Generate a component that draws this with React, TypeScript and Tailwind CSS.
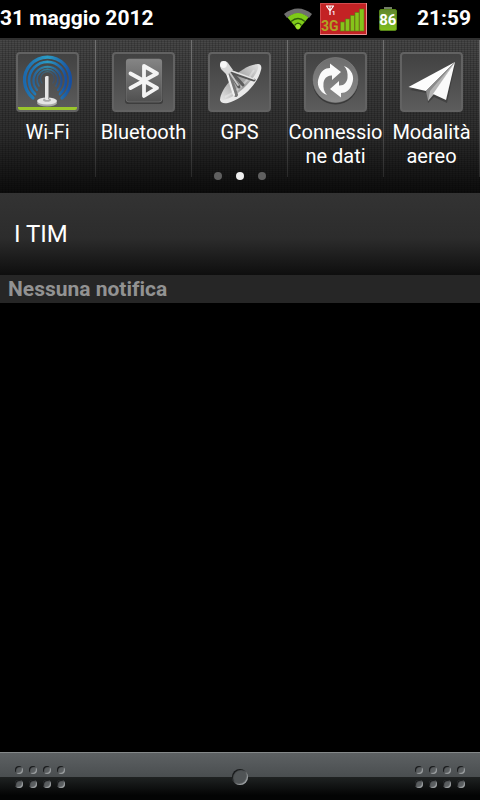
import React, { ReactNode } from 'react';

interface Toggle {
  label: string;
  icon: ReactNode;
  active?: boolean;
}

const WifiAntenna = () => (
  <svg viewBox="2 2 59 56" className="h-full w-full" aria-hidden="true">
    <defs>
      <linearGradient id="ring" x1="0" y1="0" x2="1" y2="0">
        <stop offset="0" stopColor="#1b69ae" />
        <stop offset="0.5" stopColor="#2b9cc4" />
        <stop offset="1" stopColor="#174fa0" />
      </linearGradient>
    </defs>
    <g fill="none" stroke="url(#ring)" strokeLinecap="round">
      <path d="M17 46A23 23 0 1 1 46 46" strokeWidth="3.2" />
      <path d="M19 42A18.5 18.5 0 1 1 44 42" strokeWidth="2.6" />
      <path d="M21 38A14 14 0 1 1 42 38" strokeWidth="2.2" opacity="0.8" />
      <path d="M23 34A10.5 10.5 0 1 1 40 34" strokeWidth="1.6" opacity="0.65" />
      <path d="M26 31A7 7 0 1 1 37 31" strokeWidth="1.2" opacity="0.4" />
    </g>
    <ellipse cx="31" cy="51" rx="10" ry="3.5" fill="#a9a9a9" />
    <ellipse cx="31" cy="49" rx="10" ry="3.5" fill="#e4e4e4" />
    <ellipse cx="31" cy="48" rx="4" ry="1.8" fill="#aaa" />
    <rect x="29" y="24" width="4" height="24" rx="1.5" fill="#e6e6e6" />
    <path d="M32.5 25V47" stroke="#a0a0a0" />
  </svg>
);

const BluetoothIcon = () => (
  <svg viewBox="2 2 59 56" className="h-full w-full" aria-hidden="true">
    <defs>
      <linearGradient id="bt" x1="0" y1="0" x2="0" y2="1">
        <stop offset="0" stopColor="#858585" />
        <stop offset="1" stopColor="#505050" />
      </linearGradient>
    </defs>
    <rect x="13" y="8" width="38" height="44" rx="3" fill="#2b2b2b" opacity="0.6" />
    <rect x="14" y="7" width="36" height="43" rx="3" fill="url(#bt)" stroke="#858585" strokeOpacity="0.5" />
    <path
      d="M18.5 21.5L45 36L32 44V14L45 21.5L18.5 36"
      fill="none"
      stroke="#f4f4f4"
      strokeWidth="3.8"
      strokeLinecap="round"
      strokeLinejoin="round"
    />
  </svg>
);

const DishIcon = () => (
  <svg viewBox="2 2 59 56" className="h-full w-full" aria-hidden="true">
    <defs>
      <linearGradient id="dish" x1="0" y1="1" x2="1" y2="0">
        <stop offset="0" stopColor="#e8e8e8" />
        <stop offset="0.5" stopColor="#9a9a9a" />
        <stop offset="1" stopColor="#e0e0e0" />
      </linearGradient>
    </defs>
    <path d="M12 48C13 52 18 52 23 50C36 46 50 31 53 18C54 15 53 12 50 12Z" fill="#e9e9e9" />
    <path d="M12 48C12 37 32 13 50 12C54 20 27 50 12 48Z" fill="url(#dish)" />
    <path d="M17 45C24 42 37 34 46 18" fill="none" stroke="#f2f2f2" strokeWidth="2" opacity="0.4" />
    <g fill="none" strokeLinecap="round">
      <path d="M24 24L31 35M27 24L35 33" stroke="#5c5c5c" strokeWidth="3" />
      <path d="M22 20L46 28" stroke="#555" strokeWidth="3" />
      <path d="M21 22L28 43" stroke="#777" strokeWidth="4" />
      <path d="M21 18L46 27" stroke="#e4e4e4" strokeWidth="1.8" />
      <path d="M19 21L26 43" stroke="#f0f0f0" strokeWidth="2.2" />
      <path d="M22 21L30 33" stroke="#c5c5c5" strokeWidth="1.8" />
    </g>
    <path d="M12 14C12 9 18 8 20 11L25 18L19 23L13 17Z" fill="#d9d9d9" />
    <circle cx="15.5" cy="12.5" r="3.4" fill="#f7f7f7" />
  </svg>
);

const arrow = 'M23 43C15 40 12 32 15 25C17 19 21 16 26 16V11.5L37 20L28 28V23.5C23 23 20 27 19.5 31C19 36 20 40 23 43Z';

const SyncIcon = () => (
  <svg viewBox="2 2 59 56" className="h-full w-full" aria-hidden="true">
    <defs>
      <linearGradient id="disc" x1="0" y1="0" x2="0" y2="1">
        <stop offset="0" stopColor="#6d6d6d" />
        <stop offset="1" stopColor="#8d8d8d" />
      </linearGradient>
    </defs>
    <circle cx="31.5" cy="29.5" r="23" fill="#3a3a3a" />
    <circle cx="31.5" cy="28" r="22.5" fill="url(#disc)" stroke="#8b8b8b" strokeOpacity="0.5" />
    <path d={arrow} fill="#fafafa" />
    <path d={arrow} fill="#fafafa" transform="rotate(180 31.5 28.5)" />
  </svg>
);

const PlaneIcon = () => (
  <svg viewBox="2 2 59 56" className="h-full w-full" aria-hidden="true">
    <path d="M55 13L47 51L34 45L28 51L27 41L10 38Z" fill="#333" opacity="0.6" />
    <path d="M55 10L8.5 35L26 39Z" fill="#fdfdfd" />
    <path d="M55 10L26 39L28 49L34 40Z" fill="#8b8b8b" />
    <path d="M28 49L30 39L55 10L34 42Z" fill="#b5b5b5" />
    <path d="M55 10L33 42L46 48Z" fill="#fafafa" />
  </svg>
);

const toggles: Toggle[] = [
  { label: 'Wi-Fi', icon: <WifiAntenna />, active: true },
  { label: 'Bluetooth', icon: <BluetoothIcon /> },
  { label: 'GPS', icon: <DishIcon /> },
  { label: 'Connessione dati', icon: <SyncIcon /> },
  { label: 'Modalità aereo', icon: <PlaneIcon /> },
];

const WifiStatus = () => (
  <svg viewBox="0 0 28 22" className="h-[22px] w-7" role="img" aria-label="Wi-Fi">
    <path d="M0 6Q14 -5 28 6L25 10Q14 1 3 10Z" fill="#6f6f6f" />
    <path d="M3.5 9.5Q14 0.5 24.5 9.5L14 22Z" fill="#7ecb18" />
    <path d="M7 13.5Q14 7.5 21 13.5M10.5 17.5Q14 13 17.5 17.5" fill="none" stroke="#2f5c0a" strokeWidth="1.3" />
    <circle cx="14" cy="18.5" r="2.5" fill="#9ee52c" />
  </svg>
);

const MobileSignal = () => (
  <svg viewBox="0 0 47 32" className="h-8 w-[47px]" role="img" aria-label="3G">
    <rect width="47" height="32" fill="#c32224" />
    <path d="M0.5 31.5V0.5H46.5" fill="none" stroke="#d24c4e" />
    <path d="M46.5 0V31.5H0" fill="none" stroke="#e99092" />
    <path d="M6 3H14M6.5 3L10 8L13.5 3M10 3V12" fill="none" stroke="#fff" strokeWidth="1.2" />
    <text x="12" y="12" fill="#fff" fontSize="6" fontFamily="Roboto, sans-serif">1</text>
    <text x="1" y="28" fill="#b0a522" fontSize="14" fontWeight="700" fontFamily="Roboto, sans-serif">3G</text>
    <g fill="#86c41a" stroke="#5e7c16" strokeWidth="0.6">
      <rect x="20.5" y="19" width="4" height="9" />
      <rect x="25.5" y="16" width="4" height="12" />
      <rect x="30.5" y="12.5" width="4" height="15.5" />
      <rect x="35" y="9.5" width="4" height="18.5" />
      <rect x="39.5" y="6" width="4.5" height="22" />
    </g>
  </svg>
);

const Battery = () => (
  <div className="flex w-[18px] flex-col items-center">
    <div className="h-[2px] w-2 bg-[#717b66]" />
    <div className="flex h-[22px] w-full items-center justify-center rounded-[2px] border border-[#578518] bg-linear-to-b from-[#62872f] to-[#7fbd18] text-[15px] font-bold leading-4">
      86
    </div>
  </div>
);

const StatusBar = () => (
  <header className="flex h-[38px] shrink-0 items-center justify-between bg-black pr-[9px] text-[21px] font-bold">
    <time>31 maggio 2012</time>
    <div className="flex items-center">
      <WifiStatus />
      <div className="ml-2">
        <MobileSignal />
      </div>
      <div className="ml-3">
        <Battery />
      </div>
      <time className="ml-5">21:59</time>
    </div>
  </header>
);

const ToggleButton: React.FC<{ toggle: Toggle }> = ({ toggle }) => (
  <button type="button" aria-pressed={!!toggle.active} className="flex min-w-0 flex-1 text-xl leading-6">
    <span className="flex min-w-0 flex-1 flex-col items-center pt-3">
      <span className="relative h-[60px] w-[63px] overflow-hidden rounded border-2 border-[#626262] bg-linear-to-b from-[#424242] to-[#5c5c5c]">
        {toggle.icon}
        {toggle.active && <span className="absolute inset-x-0 bottom-0 h-[3px] bg-[#9ac62c]" />}
      </span>
      <span className="mt-2 w-full text-center wrap-break-word">{toggle.label}</span>
    </span>
    <span className="h-full w-px bg-linear-to-b from-[#707070] via-[#606060] to-[#292929]" />
  </button>
);

const TogglePanel = () => (
  <section className="relative h-[155px] shrink-0 border-t-2 border-[#303030] bg-[repeating-linear-gradient(0deg,#0000_0_1px,#00000028_1px_2px),repeating-linear-gradient(90deg,#0000_0_2px,#00000028_2px_3px),linear-gradient(#484848,#2e2e2e_60%,#0c0c0c)]">
    <div className="flex h-[137px]">
      {toggles.map((toggle) => (
        <ToggleButton key={toggle.label} toggle={toggle} />
      ))}
    </div>
    <div className="absolute inset-x-0 bottom-[13px] flex justify-center gap-[14px]">
      <span className="h-2 w-2 rounded-full bg-[#5f5f5f]" />
      <span className="h-2 w-2 rounded-full bg-[#efefef]" />
      <span className="h-2 w-2 rounded-full bg-[#5f5f5f]" />
    </div>
  </section>
);

const Grip = () => (
  <div className="grid grid-cols-4 gap-x-[6px] gap-y-[6px]">
    {Array.from({ length: 8 }, (_, i) => (
      <span
        key={i}
        className="h-2 w-2 rounded-full bg-[#5a5e60] shadow-[inset_1px_1px_1px_#141617,inset_-1px_-1px_1px_#a0a4a6]"
      />
    ))}
  </div>
);

const App: React.FC = () => {
  return (
    <div className="flex min-h-screen flex-col bg-black font-[Roboto,sans-serif] text-white [font-variant-ligatures:none]">
      <StatusBar />
      <TogglePanel />
      <main className="flex-1">
        <div className="flex h-[82px] items-center bg-[linear-gradient(#333,#2c2c2c_55%,#0e0e0e)] px-[14px] text-2xl">
          I TIM
        </div>
        <h2 className="h-7 bg-[#262626] px-2 text-[21px] font-bold leading-7 text-[#929292]">Nessuna notifica</h2>
      </main>
      <footer className="flex h-12 shrink-0 items-center justify-between border-t border-[#85898a] bg-[linear-gradient(#5d6163,#4a4e50_50%,#202323_50%,#030404_90%)] px-[15px]">
        <Grip />
        <button
          type="button"
          aria-label="Chiudi"
          className="h-4 w-4 rounded-full bg-[#505456] shadow-[inset_1px_1px_1px_#141617,inset_-1px_-1px_1px_#a0a4a6]"
        />
        <Grip />
      </footer>
    </div>
  );
};

export default App;
